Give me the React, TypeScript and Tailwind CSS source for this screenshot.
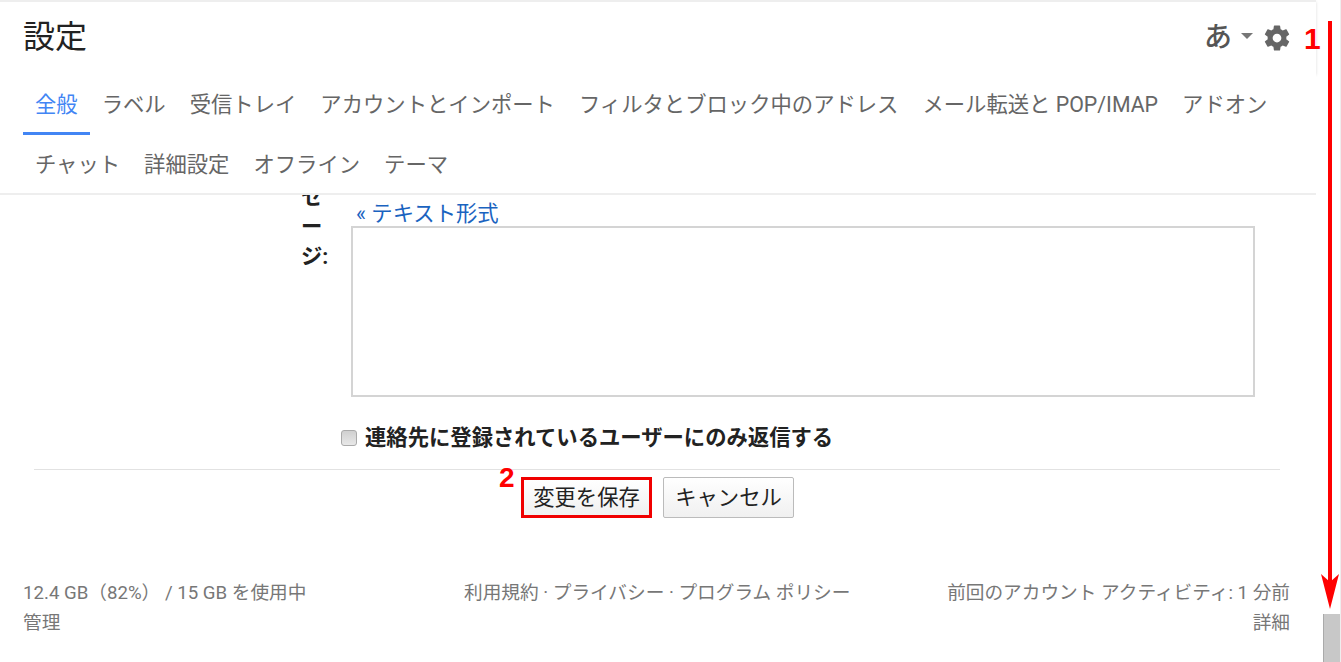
const font = "font-['Roboto','Noto_Sans_CJK_JP',sans-serif]";

const tabRows = [
  ["全般", "ラベル", "受信トレイ", "アカウントとインポート", "フィルタとブロック中のアドレス", "メール転送と POP/IMAP", "アドオン"],
  ["チャット", "詳細設定", "オフライン", "テーマ"],
];

function Gear() {
  return (
    <svg width="30" height="30" viewBox="0 0 24 24" fill="#666">
      <path d="M19.43 12.98c.04-.32.07-.64.07-.98s-.03-.66-.07-.98l2.11-1.65c.19-.15.24-.42.12-.64l-2-3.46c-.12-.22-.39-.3-.61-.22l-2.49 1c-.52-.4-1.08-.73-1.69-.98l-.38-2.65C14.46 2.18 14.25 2 14 2h-4c-.25 0-.46.18-.49.42l-.38 2.65c-.61.25-1.17.59-1.69.98l-2.49-1c-.23-.09-.49 0-.61.22l-2 3.46c-.13.22-.07.49.12.64l2.11 1.65c-.04.32-.07.65-.07.98s.03.66.07.98l-2.11 1.65c-.19.15-.24.42-.12.64l2 3.46c.12.22.39.3.61.22l2.49-1c.52.4 1.08.73 1.69.98l.38 2.65c.03.24.24.42.49.42h4c.25 0 .46-.18.49-.42l.38-2.65c.61-.25 1.17-.59 1.69-.98l2.49 1c.23.09.49 0 .61-.22l2-3.46c.12-.22.07-.49-.12-.64l-2.11-1.65zM12 15.5c-1.93 0-3.5-1.57-3.5-3.5s1.57-3.5 3.5-3.5 3.5 1.57 3.5 3.5-1.57 3.5-3.5 3.5z" />
    </svg>
  );
}

function Tab({ label }: { label: string }) {
  const active = label === "全般";
  return (
    <div
      className={
        "h-[60px] px-3 text-[21.33px] leading-[60px] whitespace-nowrap " +
        (active ? "text-[#4285f4] border-b-[3px] border-[#4285f4]" : "text-[#666]")
      }
    >
      {label}
    </div>
  );
}

function Header() {
  return (
    <div className="flex-none relative z-10">
      <div className="h-[73px] border-t-2 border-[#eee] shadow-[0_2px_3px_rgba(0,0,0,0.14)] flex items-center pl-[23px] pr-6 bg-white">
        <div className="flex-1 text-[32px] leading-[40px] -mt-[2px] text-[#222]">設定</div>
        <span className="text-[28px] font-medium text-[#555] mr-[9px]">あ</span>
        <div className="w-0 h-0 border-x-[6px] border-x-transparent border-t-[6px] border-t-[#777] mr-[9px] mb-1" />
        <Gear />
      </div>
      <div className="h-[122px] pt-[2px] pl-[23px] border-b-2 border-[#eee] bg-white">
        {tabRows.map((row) => (
          <div key={row[0]} className="flex">
            {row.map((label) => (
              <Tab key={label} label={label} />
            ))}
          </div>
        ))}
      </div>
    </div>
  );
}

function MessageRow() {
  return (
    <div className="flex h-[227px]">
      <div className="w-[301px] flex-none" />
      <div className="w-[50px] flex-none -mt-[13px] text-[21.33px] leading-[30px] font-bold text-[#222]">
        <div className="w-[28px] break-all">セージ:</div>
      </div>
      <div className="flex-1 flex flex-col">
        <div className="h-[31px] pl-[5px] pt-[5px] text-[21.33px] leading-[27px] text-[#1a63c0]">« テキスト形式</div>
        <div className="w-[904px] h-[171px] border-2 border-[#d4d4d4] bg-white" />
      </div>
    </div>
  );
}

function Buttons() {
  return (
    <div className="flex h-[41px] mt-[7px] pl-[521px] gap-[11px]">
      <button className="w-[131px] border-[3px] border-[#f00000] bg-linear-to-b from-white to-[#f0f0f0] text-[21.33px] text-[#222]">
        変更を保存
      </button>
      <button className="w-[131px] border border-[#bbb] rounded-[2px] bg-linear-to-b from-white to-[#f0f0f0] text-[21.33px] text-[#222]">
        キャンセル
      </button>
    </div>
  );
}

function Footer() {
  return (
    <div className="flex pl-[23px] pr-[26px] mt-[60px] text-[18.67px] leading-[30px] text-[#777] whitespace-nowrap">
      <div className="w-[441px]">
        <div>12.4 GB（82%） / 15 GB を使用中</div>
        <div>管理</div>
      </div>
      <div className="flex-1">利用規約 · プライバシー · プログラム ポリシー</div>
      <div className="text-right">
        <div>前回のアカウント アクティビティ: 1 分前</div>
        <div>詳細</div>
      </div>
    </div>
  );
}

function Annotations() {
  return (
    <>
      <svg className="absolute z-20 left-[1320px] top-[20px]" width="20" height="590" viewBox="0 0 20 590">
        <rect x="8" y="1" width="4" height="565" fill="#ff0000" />
        <path d="M1 554 L10 589 L19 554 L10 562 Z" fill="#ff0000" />
      </svg>
      <span className="absolute z-20 left-[1304px] top-[21px] text-[30px] leading-[36px] font-bold text-[#f00] font-['Liberation_Sans',sans-serif]">1</span>
      <span className="absolute z-20 left-[499px] top-[460px] text-[28px] leading-[36px] font-bold text-[#f00] font-['Liberation_Sans',sans-serif]">2</span>
    </>
  );
}

export default function App() {
  return (
    <div className={"relative flex h-[662px] w-[1341px] overflow-hidden bg-white " + font}>
      <div className="w-[1316px] flex-none flex flex-col">
        <Header />
        <div className="flex-1 overflow-hidden">
          <MessageRow />
          <div className="flex items-center h-[32px] pl-[341px] gap-2">
            <div className="w-4 h-4 rounded-[3px] border border-[#aaa] bg-linear-to-b from-[#d0d0d0] to-[#e8e8e8]" />
            <span className="text-[21.33px] font-bold text-[#222] whitespace-nowrap">連絡先に登録されているユーザーにのみ返信する</span>
          </div>
          <div className="ml-[34px] mr-[36px] mt-[15px] border-t border-[#e2e2e2]" />
          <Buttons />
          <Footer />
        </div>
      </div>
      <div className="flex-1 flex flex-col justify-end items-end border-r border-[#eee]">
        <div className="w-[17px] h-[48px] bg-[#c8c8c8] border-l border-[#aaa]" />
      </div>
      <Annotations />
    </div>
  );
}
